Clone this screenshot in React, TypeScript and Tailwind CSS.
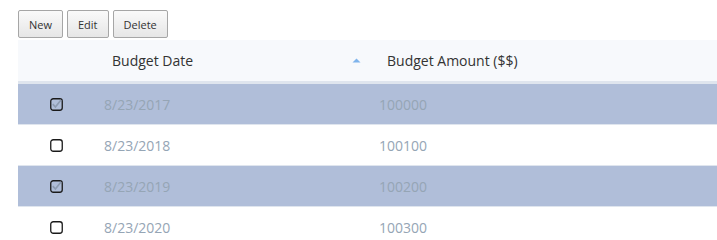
import React from "react";

const rows = [
  { date: "8/23/2017", amount: "100000", selected: true },
  { date: "8/23/2018", amount: "100100", selected: false },
  { date: "8/23/2019", amount: "100200", selected: true },
  { date: "8/23/2020", amount: "100300", selected: false },
];

function Check({ checked }: { checked: boolean }) {
  return (
    <svg width="13" height="13" viewBox="0 0 13 13">
      <rect x="0.75" y="0.75" width="11.5" height="11.5" rx="2.5" fill={checked ? "#b0bed9" : "#ffffff"} stroke="#1a1a1a" strokeWidth="1.3" />
      {checked && <path d="M2.8 6.2 L5.4 9 L11.2 1.8" fill="none" stroke="#8d9bb0" strokeWidth="1.7" />}
    </svg>
  );
}

function Btn({ children }: { children: React.ReactNode }) {
  return (
    <button className="h-[28px] px-[10px] border border-[#a6a6a6] rounded-[2px] bg-gradient-to-b from-[#fafafa] to-[#e6e6e6] text-[11px] leading-none text-[#333]">
      {children}
    </button>
  );
}

export default function App() {
  return (
    <div className="w-[717px] h-[240px] bg-white overflow-hidden" style={{ fontFamily: '"Open Sans", sans-serif' }}>
      <div className="flex gap-[4px] pl-[18px] pt-[10px]">
        <Btn>New</Btn>
        <Btn>Edit</Btn>
        <Btn>Delete</Btn>
      </div>
      <div className="ml-[18px] mt-[2px]">
        <div className="flex h-[44px] items-center bg-[#f7f9fc] border-b-[3px] border-[#dfe5ee] text-[14px] text-[#333]">
          <div className="w-[86px]" />
          <div className="w-[275px] pl-[8px] flex items-center justify-between">
            <span>Budget Date</span>
            <svg width="9" height="5" viewBox="0 0 9 5" className="mr-[18px]">
              <path d="M0.5 4.5 L4.5 0.5 L8.5 4.5 Z" fill="#7fb4ec" />
            </svg>
          </div>
          <div className="pl-[8px]">Budget Amount ($$)</div>
        </div>
        {rows.map((r) => (
          <div
            key={r.date}
            className={`flex h-[41px] items-center border-b border-[#dfe5ee] text-[14px] text-[#95a5b5] ${r.selected ? "bg-[#b0bed9]" : "bg-white"}`}
          >
            <div className="w-[86px] pl-[32px] flex items-center">
              <Check checked={r.selected} />
            </div>
            <div className="w-[275px]">{r.date}</div>
            <div>{r.amount}</div>
          </div>
        ))}
      </div>
    </div>
  );
}
